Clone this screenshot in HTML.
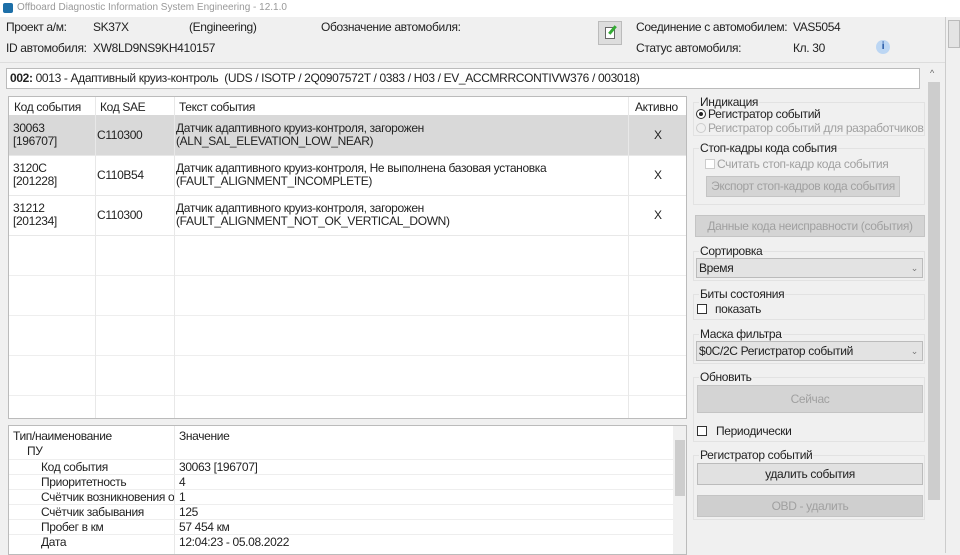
<!DOCTYPE html>
<html><head><meta charset="utf-8"><style>
*{margin:0;padding:0;box-sizing:border-box}
body{width:960px;height:553px;overflow:hidden;background:#f0f0f0;font-family:"Liberation Sans","Noto Sans CJK SC",sans-serif;font-size:12px;letter-spacing:-0.35px;color:#222;position:relative}
.a{position:absolute;white-space:nowrap}
.g{color:#a0a0a0}
.btn{position:absolute;background:#d4d4d4;border:1px solid #c4c4c4;text-align:center;white-space:nowrap}
.grp{position:absolute;border:1px solid #e2e2e2}
.cb{position:absolute;width:10px;height:10px;border:1px solid #333;background:#fff}
</style></head><body>
<div class="a" style="left:0;top:0;width:960px;height:17px;background:#fff"></div>
<div class="a" style="left:3px;top:3px;width:10px;height:10px;background:#1d6fa8;border-radius:2px"></div>
<div class="a" style="left:17px;top:2px;font-size:10px;color:#999;letter-spacing:0">Offboard Diagnostic Information System Engineering - 12.1.0</div>
<div class="a" style="left:6px;top:20px">Проект а/м:</div>
<div class="a" style="left:93px;top:20px">SK37X</div>
<div class="a" style="left:189px;top:20px">(Engineering)</div>
<div class="a" style="left:321px;top:20px">Обозначение автомобиля:</div>
<div class="a" style="left:6px;top:41px">ID автомобиля:</div>
<div class="a" style="left:93px;top:41px">XW8LD9NS9KH410157</div>
<div class="a" style="left:598px;top:21px;width:24px;height:24px;background:#ddd;border:1px solid #bbb"><div style="margin:5px 6px;width:10px;height:12px;border:1px solid #666;background:#fff"></div><div style="position:absolute;left:12px;top:3px;width:3px;height:10px;background:#3a3;transform:rotate(40deg)"></div></div>
<div class="a" style="left:636px;top:20px">Соединение с автомобилем:</div>
<div class="a" style="left:793px;top:20px">VAS5054</div>
<div class="a" style="left:636px;top:41px">Статус автомобиля:</div>
<div class="a" style="left:793px;top:41px">Кл. 30</div>
<div class="a" style="left:876px;top:40px;width:14px;height:14px;border-radius:7px;background:#bcd6f3;color:#1a4fa0;font-size:10px;font-weight:bold;text-align:center;line-height:14px">i</div>
<div class="a" style="left:0;top:62px;width:945px;height:1px;background:#ddd"></div>
<div class="a" style="left:945px;top:17px;width:1px;height:536px;background:#ccc"></div>
<div class="a" style="left:948px;top:20px;width:12px;height:28px;background:#e4e4e4;border:1px solid #bbb"></div>
<div class="a" style="left:6px;top:68px;width:914px;height:21px;background:#fff;border:1px solid #bbb;padding:2px 3px"><b>002:</b> 0013 - Адаптивный круиз-контроль &nbsp;(UDS / ISOTP / 2Q0907572T / 0383 / H03 / EV_ACCMRRCONTIVW376 / 003018)</div>
<div class="a" style="left:928px;top:68px;width:12px;height:440px;background:#f0f0f0"></div>
<div class="a" style="left:928px;top:82px;width:12px;height:418px;background:#cdcdcd"></div>
<div class="a" style="left:930px;top:68px;font-size:9px;color:#666">^</div>
<!-- table -->
<div class="a" style="left:8px;top:96px;width:679px;height:323px;background:#fff;border:1px solid #bbb;overflow:hidden">
<div class="a" style="left:0;top:18px;width:679px;height:40px;background:#d9d9d9"></div>
<div class="a" style="left:0;top:58px;width:679px;height:1px;background:#e8e8e8"></div>
<div class="a" style="left:0;top:98px;width:679px;height:1px;background:#e8e8e8"></div>
<div class="a" style="left:0;top:138px;width:679px;height:1px;background:#e8e8e8"></div>
<div class="a" style="left:0;top:178px;width:679px;height:1px;background:#eee"></div>
<div class="a" style="left:0;top:218px;width:679px;height:1px;background:#eee"></div>
<div class="a" style="left:0;top:258px;width:679px;height:1px;background:#eee"></div>
<div class="a" style="left:0;top:298px;width:679px;height:1px;background:#eee"></div>
<div class="a" style="left:86px;top:0;width:1px;height:323px;background:#e8e8e8"></div>
<div class="a" style="left:165px;top:0;width:1px;height:323px;background:#e8e8e8"></div>
<div class="a" style="left:619px;top:0;width:1px;height:323px;background:#e8e8e8"></div>
<div class="a" style="left:5px;top:3px">Код события</div><div class="a" style="left:91px;top:3px">Код SAE</div><div class="a" style="left:170px;top:3px">Текст события</div><div class="a" style="left:626px;top:3px">Активно</div>
<div class="a" style="left:4px;top:25px;line-height:13px">30063<br>[196707]</div><div class="a" style="left:88px;top:31px">C110300</div><div class="a" style="left:167px;top:25px;line-height:13px">Датчик адаптивного круиз-контроля, загорожен<br>(ALN_SAL_ELEVATION_LOW_NEAR)</div><div class="a" style="left:645px;top:31px">X</div>
<div class="a" style="left:4px;top:65px;line-height:13px">3120C<br>[201228]</div><div class="a" style="left:88px;top:71px">C110B54</div><div class="a" style="left:167px;top:65px;line-height:13px">Датчик адаптивного круиз-контроля, Не выполнена базовая установка<br>(FAULT_ALIGNMENT_INCOMPLETE)</div><div class="a" style="left:645px;top:71px">X</div>
<div class="a" style="left:4px;top:105px;line-height:13px">31212<br>[201234]</div><div class="a" style="left:88px;top:111px">C110300</div><div class="a" style="left:167px;top:105px;line-height:13px">Датчик адаптивного круиз-контроля, загорожен<br>(FAULT_ALIGNMENT_NOT_OK_VERTICAL_DOWN)</div><div class="a" style="left:645px;top:111px">X</div>
</div>
<!-- detail -->
<div class="a" style="left:8px;top:425px;width:679px;height:130px;background:#fff;border:1px solid #bbb;overflow:hidden">
<div class="a" style="left:165px;top:0;width:1px;height:130px;background:#e8e8e8"></div>
<div class="a" style="left:664px;top:0;width:14px;height:130px;background:#f0f0f0"></div>
<div class="a" style="left:666px;top:14px;width:10px;height:56px;background:#cdcdcd"></div>
<div class="a" style="left:4px;top:3px">Тип/наименование</div><div class="a" style="left:170px;top:3px">Значение</div>
<div class="a" style="left:18px;top:18px">ПУ</div>
<div style="position:absolute;left:0;top:33px;width:664px;line-height:15px">
<div style="position:relative;height:15px;border-top:1px solid #eee"><span class="a" style="left:32px">Код события</span><span class="a" style="left:170px">30063 [196707]</span></div>
<div style="position:relative;height:15px;border-top:1px solid #eee"><span class="a" style="left:32px">Приоритетность</span><span class="a" style="left:170px">4</span></div>
<div style="position:relative;height:15px;border-top:1px solid #eee"><span class="a" style="left:32px;width:133px;overflow:hidden">Счётчик возникновения ош</span><span class="a" style="left:170px">1</span></div>
<div style="position:relative;height:15px;border-top:1px solid #eee"><span class="a" style="left:32px">Счётчик забывания</span><span class="a" style="left:170px">125</span></div>
<div style="position:relative;height:15px;border-top:1px solid #eee"><span class="a" style="left:32px">Пробег в км</span><span class="a" style="left:170px">57 454 км</span></div>
<div style="position:relative;height:15px;border-top:1px solid #eee"><span class="a" style="left:32px">Дата</span><span class="a" style="left:170px">12:04:23 - 05.08.2022</span></div>
</div>
</div>
<!-- right panel -->
<div class="grp" style="left:693px;top:102px;width:232px;height:34px"></div>
<div class="a" style="left:699px;top:95px;background:#f0f0f0;padding:0 1px">Индикация</div>
<div class="a" style="left:696px;top:109px;width:10px;height:10px;border:1px solid #333;border-radius:5px;background:#fff"><div style="margin:2px;width:4px;height:4px;border-radius:2px;background:#222"></div></div>
<div class="a" style="left:708px;top:107px">Регистратор событий</div>
<div class="a" style="left:696px;top:123px;width:10px;height:10px;border:1px solid #ccc;border-radius:5px"></div>
<div class="a g" style="left:708px;top:121px">Регистратор событий для разработчиков</div>
<div class="grp" style="left:693px;top:148px;width:232px;height:57px"></div>
<div class="a" style="left:699px;top:141px;background:#f0f0f0;padding:0 1px">Стоп-кадры кода события</div>
<div class="cb" style="left:705px;top:159px;border-color:#ccc"></div>
<div class="a g" style="left:717px;top:157px">Считать стоп-кадр кода события</div>
<div class="btn g" style="left:706px;top:176px;width:194px;height:21px;line-height:19px">Экспорт стоп-кадров кода события</div>
<div class="btn g" style="left:695px;top:215px;width:230px;height:22px;line-height:20px">Данные кода неисправности (события)</div>
<div class="grp" style="left:693px;top:251px;width:232px;height:30px"></div>
<div class="a" style="left:699px;top:244px;background:#f0f0f0;padding:0 1px">Сортировка</div>
<div class="a" style="left:696px;top:258px;width:227px;height:20px;background:#e3e3e3;border:1px solid #bbb;padding:2px 2px;line-height:14px">Время<span style="position:absolute;right:4px;font-size:9px;color:#777">⌄</span></div>
<div class="grp" style="left:693px;top:294px;width:232px;height:26px"></div>
<div class="a" style="left:699px;top:287px;background:#f0f0f0;padding:0 1px">Биты состояния</div>
<div class="cb" style="left:697px;top:304px"></div>
<div class="a" style="left:715px;top:302px">показать</div>
<div class="grp" style="left:693px;top:334px;width:232px;height:30px"></div>
<div class="a" style="left:699px;top:327px;background:#f0f0f0;padding:0 1px">Маска фильтра</div>
<div class="a" style="left:696px;top:341px;width:227px;height:20px;background:#e3e3e3;border:1px solid #bbb;padding:2px 2px;line-height:14px">$0C/2C Регистратор событий<span style="position:absolute;right:4px;font-size:9px;color:#777">⌄</span></div>
<div class="grp" style="left:693px;top:377px;width:232px;height:65px"></div>
<div class="a" style="left:699px;top:370px;background:#f0f0f0;padding:0 1px">Обновить</div>
<div class="btn g" style="left:697px;top:385px;width:226px;height:28px;line-height:26px">Сейчас</div>
<div class="cb" style="left:697px;top:426px"></div>
<div class="a" style="left:716px;top:424px">Периодически</div>
<div class="grp" style="left:693px;top:455px;width:232px;height:65px"></div>
<div class="a" style="left:699px;top:448px;background:#f0f0f0;padding:0 1px">Регистратор событий</div>
<div class="btn" style="left:697px;top:463px;width:226px;height:22px;line-height:20px;background:#e1e1e1;border-color:#bbb">удалить события</div>
<div class="btn g" style="left:697px;top:495px;width:226px;height:22px;line-height:20px;background:#cfcfcf">OBD - удалить</div>
</body></html>
